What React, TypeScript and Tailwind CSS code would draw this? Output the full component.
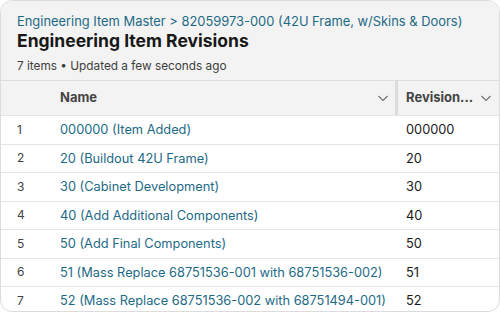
import React from 'react';

interface Revision {
  index: number;
  name: string;
  revision: string;
}

const rows: Revision[] = [
  { index: 1, name: '000000 (Item Added)', revision: '000000' },
  { index: 2, name: '20 (Buildout 42U Frame)', revision: '20' },
  { index: 3, name: '30 (Cabinet Development)', revision: '30' },
  { index: 4, name: '40 (Add Additional Components)', revision: '40' },
  { index: 5, name: '50 (Add Final Components)', revision: '50' },
  { index: 6, name: '51 (Mass Replace 68751536-001 with 68751536-002)', revision: '51' },
  { index: 7, name: '52 (Mass Replace 68751536-002 with 68751494-001)', revision: '52' },
];

const Chevron: React.FC = () => (
  <svg width="12" height="12" viewBox="0 0 12 12" className="text-[#747474]">
    <path d="M1.5 4 L6 8.5 L10.5 4" fill="none" stroke="currentColor" strokeWidth="1.2" />
  </svg>
);

export default function App() {
  return (
    <div className="w-[500px] h-[314px] bg-white font-['Inter',sans-serif]">
      <div className="h-[312px] border border-[#dcdcdc] rounded-[12px] overflow-hidden bg-white">
        <div className="bg-[#f3f3f3] px-4 pt-[13px] h-[79px]">
          <div className="text-[12.9px] leading-[16px] text-[#1d6a86]">
            Engineering Item Master &gt; 82059973-000 (42U Frame, w/Skins &amp; Doors)
          </div>
          <h1 className="mt-[1px] text-[17.5px] leading-[20px] font-bold text-[#181818]">
            Engineering Item Revisions
          </h1>
          <div className="mt-[7px] text-[11.8px] leading-[16px] text-[#3e3e3c]">
            7 items • Updated a few seconds ago
          </div>
        </div>
        <div className="flex h-[35px] bg-[#f3f3f3] border-t border-[#dddddd] text-[13px] font-bold text-[#444444]">
          <div className="w-[47px]" />
          <div className="flex-1 flex items-center justify-between pl-[12px] pr-[6px]">
            <span>Name</span>
            <Chevron />
          </div>
          <div className="w-[3px] bg-[#dcdcdc] my-0" />
          <div className="w-[101px] flex items-center justify-between pl-[8px] pr-[7px]">
            <span className="truncate">Revision...</span>
            <Chevron />
          </div>
        </div>
        {rows.map((row) => (
          <div
            key={row.index}
            className="flex h-[28.5px] items-center border-t border-[#e5e5e5] text-[12.8px]"
          >
            <div className="w-[47px] pl-[16px] text-[12px] text-[#444444]">{row.index}</div>
            <div className="flex-1 pl-[12px] text-[#1d6a86] truncate">{row.name}</div>
            <div className="w-[104px] pl-[11px] text-[#181818]">{row.revision}</div>
          </div>
        ))}
      </div>
    </div>
  );
}
